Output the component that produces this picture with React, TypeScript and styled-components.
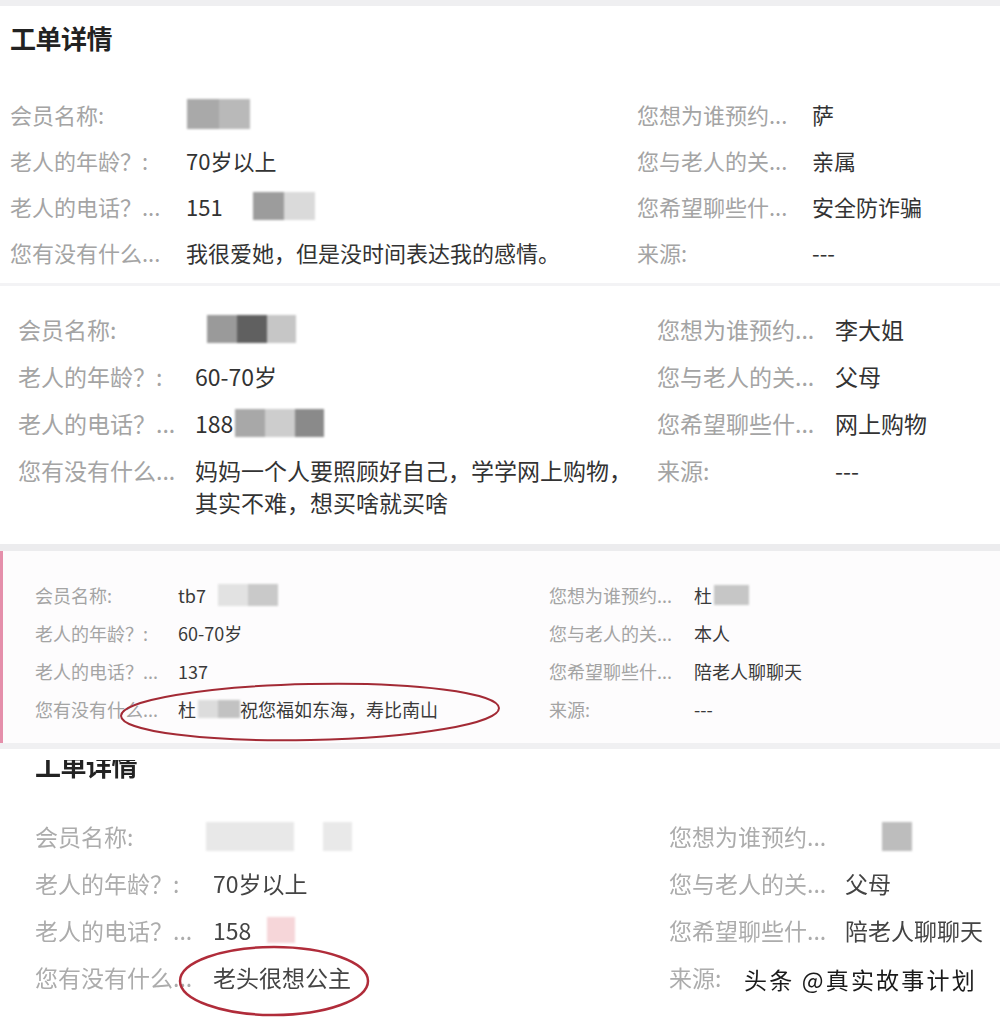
import React from "react";
import styled, { createGlobalStyle } from "styled-components";

const Global = createGlobalStyle`
  html, body { margin: 0; padding: 0; background: #ffffff; }
  body { font-family: "Noto Sans CJK SC", "Noto Sans", sans-serif; }
`;

const Page = styled.div`
  width: 1000px;
  height: 1020px;
  overflow: hidden;
  background: #ffffff;
  display: flex;
  flex-direction: column;
`;

const Strip = styled.div<{ $h: number; $c: string }>`
  height: ${(p) => p.$h}px;
  background: ${(p) => p.$c};
  flex: none;
`;

const Panel = styled.section<{
  $pt: number;
  $pb: number;
  $pl: number;
  $accent?: boolean;
  $bg?: string;
  $soft?: boolean;
}>`
  position: relative;
  flex: none;
  overflow: hidden;
  padding: ${(p) => p.$pt}px 0 ${(p) => p.$pb}px ${(p) => p.$pl}px;
  background: ${(p) => p.$bg || "#ffffff"};
  border-left: ${(p) => (p.$accent ? "3px solid #e58fab" : "none")};
  ${(p) => (p.$soft ? "filter: blur(0.4px);" : "")}
`;

const Title = styled.h2<{ $mt: number; $mb: number }>`
  margin: ${(p) => p.$mt}px 0 ${(p) => p.$mb}px 0;
  font-size: 26px;
  line-height: 34px;
  height: 34px;
  font-weight: 700;
  color: #222;
  letter-spacing: -0.5px;
`;

const Grid = styled.div<{ $cols: string; $lh: number; $gap: number; $fs: number }>`
  display: grid;
  grid-template-columns: ${(p) => p.$cols};
  grid-auto-rows: minmax(${(p) => p.$lh}px, auto);
  row-gap: ${(p) => p.$gap}px;
  font-size: ${(p) => p.$fs}px;
  line-height: ${(p) => p.$lh}px;
  align-items: start;
`;

const Label = styled.div<{ $c?: string }>`
  color: ${(p) => p.$c || "#a4a4a4"};
  white-space: nowrap;
  overflow: hidden;
  height: 100%;
`;

const Value = styled.div<{ $c?: string; $max?: number; $lh: number }>`
  display: flex;
  align-items: center;
  min-height: ${(p) => p.$lh}px;
  color: ${(p) => p.$c || "#333333"};
  ${(p) => (p.$max ? `max-width: ${p.$max}px;` : "white-space: nowrap;")}
`;

const Mask = styled.span<{ $ml: number; $h: number }>`
  display: flex;
  flex: none;
  margin-left: ${(p) => p.$ml}px;
  height: ${(p) => p.$h}px;
  filter: blur(0.8px);
`;

const MaskCell = styled.span<{ $w: number; $c: string }>`
  display: block;
  width: ${(p) => p.$w}px;
  height: 100%;
  background: ${(p) => p.$c};
`;

const Ring = styled.svg<{ $l: number; $t: number }>`
  position: absolute;
  left: ${(p) => p.$l}px;
  top: ${(p) => p.$t}px;
  overflow: visible;
  pointer-events: none;
`;

const Watermark = styled.div`
  position: absolute;
  left: 744px;
  bottom: 24px;
  font-size: 23px;
  line-height: 32px;
  color: #1a1a1a;
  letter-spacing: 2.2px;
  text-shadow: 0 0 2px #fff, 0 0 2px #fff, 1px 1px 0 #fff, -1px -1px 0 #fff;
`;

type Blk = [number, string];

const Blur = ({ ml, h, cells }: { ml: number; h: number; cells: Blk[] }) => (
  <Mask $ml={ml} $h={h}>
    {cells.map(([w, c], i) => (
      <MaskCell key={i} $w={w} $c={c} />
    ))}
  </Mask>
);

type Row = [string, React.ReactNode, string, React.ReactNode];

type Cfg = {
  cols: string;
  lh: number;
  gap: number;
  fs: number;
  labelColor?: string;
  valueColor?: string;
  wrapAt?: number;
};

const Rows = ({ rows, cfg }: { rows: Row[]; cfg: Cfg }) => (
  <Grid $cols={cfg.cols} $lh={cfg.lh} $gap={cfg.gap} $fs={cfg.fs}>
    {rows.map((r, i) => (
      <React.Fragment key={i}>
        <Label $c={cfg.labelColor}>{r[0]}</Label>
        <Value $c={cfg.valueColor} $max={cfg.wrapAt} $lh={cfg.lh}>
          {r[1]}
        </Value>
        <Label $c={cfg.labelColor}>{r[2]}</Label>
        <Value $c={cfg.valueColor} $lh={cfg.lh}>
          {r[3]}
        </Value>
      </React.Fragment>
    ))}
  </Grid>
);

const rows1: Row[] = [
  ["会员名称:", <Blur ml={1} h={30} cells={[[32, "#a9a9a9"], [31, "#b9b9b9"]]} />, "您想为谁预约...", "萨"],
  ["老人的年龄？:", "70岁以上", "您与老人的关...", "亲属"],
  [
    "老人的电话？...",
    <>
      <span>151</span>
      <Blur ml={30} h={28} cells={[[31, "#9c9c9c"], [31, "#dadada"]]} />
    </>,
    "您希望聊些什...",
    "安全防诈骗",
  ],
  ["您有没有什么...", "我很爱她，但是没时间表达我的感情。", "来源:", "---"],
];

const rows2: Row[] = [
  [
    "会员名称:",
    <Blur ml={12} h={28} cells={[[30, "#9a9a9a"], [30, "#606060"], [29, "#c6c6c6"]]} />,
    "您想为谁预约...",
    "李大姐",
  ],
  ["老人的年龄？:", "60-70岁", "您与老人的关...", "父母"],
  [
    "老人的电话？...",
    <>
      <span>188</span>
      <Blur ml={2} h={28} cells={[[30, "#a8a8a8"], [30, "#cdcdcd"], [29, "#8a8a8a"]]} />
    </>,
    "您希望聊些什...",
    "网上购物",
  ],
  ["您有没有什么...", "妈妈一个人要照顾好自己，学学网上购物，其实不难，想买啥就买啥", "来源:", "---"],
];

const rows3: Row[] = [
  [
    "会员名称:",
    <>
      <span>tb7</span>
      <Blur ml={12} h={22} cells={[[30, "#e2e2e2"], [30, "#c9c9c9"]]} />
    </>,
    "您想为谁预约...",
    <>
      <span>杜</span>
      <Blur ml={2} h={20} cells={[[35, "#c6c6c6"]]} />
    </>,
  ],
  ["老人的年龄？:", "60-70岁", "您与老人的关...", "本人"],
  ["老人的电话？...", "137", "您希望聊些什...", "陪老人聊聊天"],
  [
    "您有没有什么...",
    <>
      <span>杜</span>
      <Blur ml={2} h={18} cells={[[20, "#dcdcdc"], [22, "#c2c2c2"]]} />
      <span>祝您福如东海，寿比南山</span>
    </>,
    "来源:",
    "---",
  ],
];

const rows4: Row[] = [
  [
    "会员名称:",
    <Blur ml={-7} h={29} cells={[[88, "#e8e8e8"], [29, "#ffffff"], [29, "#e9e9e9"]]} />,
    "您想为谁预约...",
    <Blur ml={37} h={29} cells={[[30, "#bdbdbd"]]} />,
  ],
  ["老人的年龄？:", "70岁以上", "您与老人的关...", "父母"],
  [
    "老人的电话？...",
    <>
      <span>158</span>
      <Blur ml={16} h={26} cells={[[28, "#f6d6d9"]]} />
    </>,
    "您希望聊些什...",
    "陪老人聊聊天",
  ],
  ["您有没有什么...", "老头很想公主", "来源:", ""],
];

export default function App() {
  return (
    <Page>
      <Global />
      <Strip $h={6} $c="#efeff1" />
      <Panel $pt={0} $pb={16} $pl={10}>
        <Title $mt={15} $mb={44}>工单详情</Title>
        <Rows rows={rows1} cfg={{ cols: "176px 451px 175px 1fr", lh: 30, gap: 16, fs: 22 }} />
      </Panel>
      <Strip $h={3} $c="#f3f3f5" />
      <Panel $pt={27} $pb={26} $pl={18}>
        <Rows
          rows={rows2}
          cfg={{ cols: "177px 462px 178px 1fr", lh: 32, gap: 15, fs: 23, wrapAt: 442 }}
        />
      </Panel>
      <Strip $h={7} $c="#ececee" />
      <Panel $pt={31} $pb={21} $pl={32} $accent $bg="#fdfcfd">
        <Rows
          rows={rows3}
          cfg={{ cols: "143px 371px 145px 1fr", lh: 26, gap: 12, fs: 18, valueColor: "#3a3a3a" }}
        />
        <Ring $l={114} $t={129} width="386" height="64" viewBox="0 0 386 64">
          <ellipse
            cx="193"
            cy="32"
            rx="189"
            ry="28"
            fill="none"
            stroke="#a32a35"
            strokeWidth="2"
            transform="rotate(-1.2 193 32)"
          />
        </Ring>
      </Panel>
      <Strip $h={6} $c="#f0f0f2" />
      <Strip $h={11} $c="#ffffff" />
      <Panel $pt={0} $pb={26} $pl={35} $soft>
        <Title $mt={-12} $mb={38}>工单详情</Title>
        <Rows
          rows={rows4}
          cfg={{
            cols: "178px 456px 176px 1fr",
            lh: 32,
            gap: 15,
            fs: 23,
            labelColor: "#acacac",
            valueColor: "#444444",
          }}
        />
        <Ring $l={177} $t={184} width="194" height="74" viewBox="0 0 194 74">
          <ellipse cx="97" cy="37" rx="94" ry="34" fill="none" stroke="#b02c3a" strokeWidth="2.5" />
        </Ring>
        <Watermark>头条 @真实故事计划</Watermark>
      </Panel>
    </Page>
  );
}
